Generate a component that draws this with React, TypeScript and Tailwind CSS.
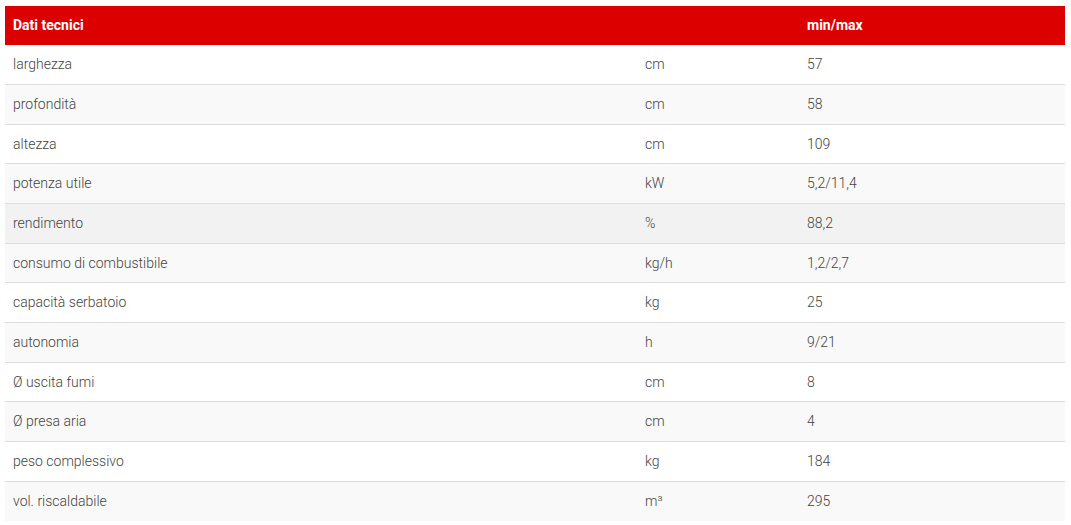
const rows: [string, string, string][] = [
  ["larghezza", "cm", "57"],
  ["profondità", "cm", "58"],
  ["altezza", "cm", "109"],
  ["potenza utile", "kW", "5,2/11,4"],
  ["rendimento", "%", "88,2"],
  ["consumo di combustibile", "kg/h", "1,2/2,7"],
  ["capacità serbatoio", "kg", "25"],
  ["autonomia", "h", "9/21"],
  ["Ø uscita fumi", "cm", "8"],
  ["Ø presa aria", "cm", "4"],
  ["peso complessivo", "kg", "184"],
  ["vol. riscaldabile", "m³", "295"],
];

export default function App() {
  return (
    <div className="min-h-screen bg-white pl-[5px] pr-[6px] pt-[6px] font-['Roboto',sans-serif]">
      <table className="w-full table-fixed border-collapse">
        <colgroup>
          <col className="w-[632px]" />
          <col className="w-[162px]" />
          <col />
        </colgroup>
        <thead>
          <tr className="h-[39px] bg-[#dd0000] text-left text-[14px] font-bold text-white">
            <th className="px-2 font-bold">Dati tecnici</th>
            <th className="px-2"></th>
            <th className="px-2 font-bold">min/max</th>
          </tr>
        </thead>
        <tbody className="text-[14px] font-light text-[#444]">
          {rows.map(([label, unit, value], i) => (
            <tr
              key={label}
              className={
                "h-[39.67px] border-t border-[#dddddd] first:border-t-0 " +
                (label === "rendimento"
                  ? "bg-[#f2f2f2]"
                  : i % 2 === 1
                    ? "bg-[#f9f9f9]"
                    : "bg-white")
              }
            >
              <td className="px-2">{label}</td>
              <td className="px-2">{unit}</td>
              <td className="px-2">{value}</td>
            </tr>
          ))}
        </tbody>
      </table>
    </div>
  );
}
